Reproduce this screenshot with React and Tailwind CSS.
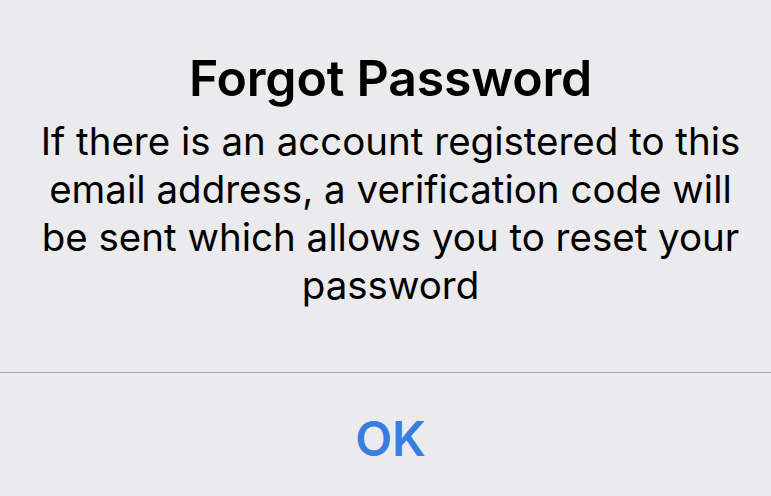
import React from 'react';

export default function App() {
  return (
    <div className="w-[771px] h-[496px] bg-[#ebebed] flex flex-col overflow-hidden pl-[10px]" style={{ fontFamily: 'Inter, "Noto Sans", sans-serif' }}>
      {/* Alert body */}
      <div className="h-[372px] flex flex-col items-center pt-[46px]">
        <h1 className="text-[50px] leading-[64px] font-semibold text-black tracking-[-0.2px]">Forgot Password</h1>
        <p className="mt-[7px] text-[38.5px] leading-[48px] text-black text-center whitespace-nowrap">
          If there is an account registered to this<br />
          email address, a verification code will<br />
          be sent which allows you to reset your<br />
          password
        </p>
      </div>
      {/* Divider */}
      <div className="h-px bg-[#a9a9ab] -ml-[10px]" />
      {/* Action */}
      <button className="flex-1 flex items-center justify-center pt-[8px] text-[48px] font-semibold text-[#3a7de0]">
        OK
      </button>
    </div>
  );
}
